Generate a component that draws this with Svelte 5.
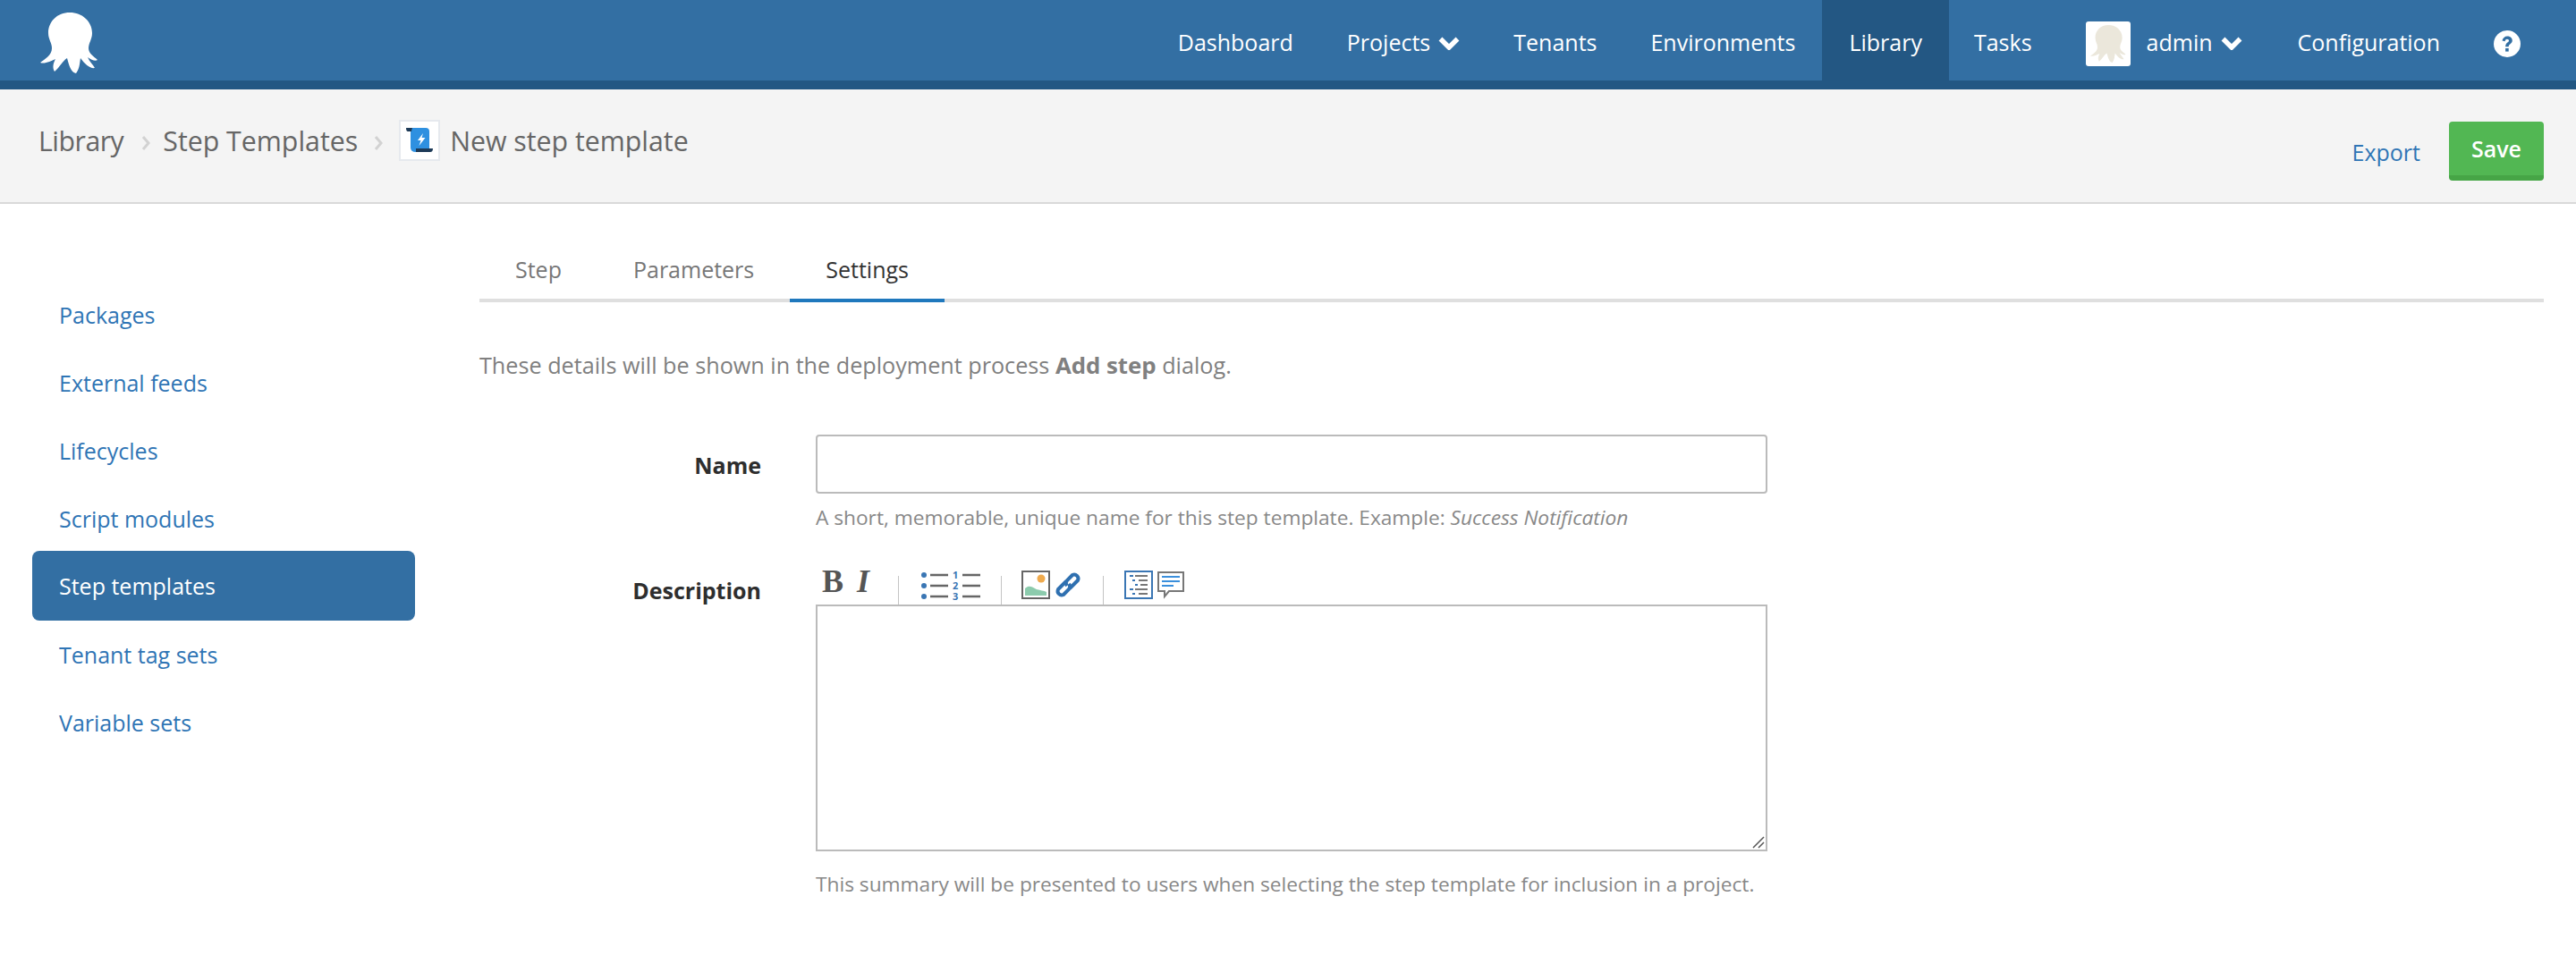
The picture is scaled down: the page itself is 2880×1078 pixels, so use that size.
<script>
	const octopus = "M78 14C92 14 103 24 103 37C103 44 99 48 99 54C99 60 105 63 109 67C107 69 102 67 98 64C100 69 104 72 106 76C101 77 95 72 90 65C89 71 89 77 85 82C79 81 77 72 75 65C70 68 67 75 61 80C58 75 60 70 62 66C57 68 50 72 45 70C50 66 58 62 58 54C58 48 54 44 54 37C54 24 64 14 78 14Z";
	const navLeft = [
		{ label: "Dashboard" },
		{ label: "Projects", caret: true },
		{ label: "Tenants" },
		{ label: "Environments" },
		{ label: "Library", active: true }
	];
	const sideItems = ["Packages", "External feeds", "Lifecycles", "Script modules", "Step templates", "Tenant tag sets", "Variable sets"];
	const tabs = ["Step", "Parameters", "Settings"];
</script>

{#snippet caret()}
	<svg class="caret" viewBox="0 0 24 16"><path d="M2.500 3.500l9.500 9.500 9.500-9.500" fill="none" stroke="#fff" stroke-width="5.500" /></svg>
{/snippet}

{#snippet sep()}
	<svg class="crumb-sep" viewBox="0 0 10 18"><path d="M2 2l6 7-6 7" fill="none" stroke="#d2d2d2" stroke-width="3" /></svg>
{/snippet}

<div class="topbar">
	<div class="bar">
		<svg class="logo" viewBox="45 14 65 68"><path d={octopus} fill="#fff" /></svg>
		<nav class="nav">
			{#each navLeft as item}
				<a class="nav-item" class:active={item.active}>
					{item.label}
					{#if item.caret}{@render caret()}{/if}
				</a>
			{/each}
			<a class="nav-item tasks">Tasks</a>
			<a class="nav-item user">
				<span class="avatar"><svg viewBox="45 14 65 68"><path d={octopus} fill="#ebe7db" /></svg></span>
				admin
				{@render caret()}
			</a>
			<a class="nav-item config">Configuration</a>
			<a class="nav-item help-link">
				<svg viewBox="0 0 30 30" class="help-icon">
					<circle cx="15" cy="15" r="15" fill="#fff" />
					<path d="M9.500 11.500C10 8.500 12.500 6.500 15.200 6.500c3 0 5.600 2 5.600 4.800 0 3.700-4.100 3.900-4.100 6.900h-3.600c0-4.600 3.900-4.700 3.900-6.700 0-1-.8-1.700-2-1.700-1.200 0-2 .8-2.400 2.400z" fill="#336fa3" />
					<rect x="13.100" y="20" width="3.600" height="3.600" fill="#336fa3" />
				</svg>
			</a>
		</nav>
	</div>
</div>

<div class="subheader">
	<div class="crumbs">
		<span class="crumb-first">Library</span>
		{@render sep()}
		<span>Step Templates</span>
		{@render sep()}
		<span class="crumb-icon">
			<svg viewBox="0 0 42 42">
				<path d="M9 7h19q4 0 4 4v23H17q-6 0-6-5V11q0-4-2-4z" fill="#2e90e0" />
				<path d="M6 7h7q-1 3-1 4H8q-2 0-2-4z" fill="#1d3a57" />
				<path d="M17 30h19q0 4-3 4H17z" fill="#1d3a57" />
				<path d="M25 13l-6 8h3.500l-2 6 7-9h-4z" fill="#fff" />
			</svg>
		</span>
		<span class="crumb-last">New step template</span>
	</div>
	<div class="actions">
		<a class="export">Export</a>
		<button class="save">Save</button>
	</div>
</div>

<div class="main">
	<aside class="side">
		{#each sideItems as item}
			<a class="side-item" class:current={item === "Step templates"}>{item}</a>
		{/each}
	</aside>
	<section class="content">
		<div class="tabs">
			{#each tabs as tab}
				<span class="tab" class:selected={tab === "Settings"}>{tab}</span>
			{/each}
		</div>
		<p class="intro">These details will be shown in the deployment process <b>Add step</b> dialog.</p>
		<div class="form">
			<div class="name-label">Name</div>
			<div>
				<input class="text-input" type="text" />
				<p class="hint">A short, memorable, unique name for this step template. Example: <em>Success Notification</em></p>
			</div>
			<div class="desc-label">Description</div>
			<div>
				<div class="toolbar">
					<span class="tool-b">B</span>
					<span class="tool-i">I</span>
					<i class="tool-sep first"></i>
					<svg class="tool-lists" viewBox="0 -4 68 40">
						<g fill="#3a76b4">
							<circle cx="4" cy="5" r="3" /><circle cx="4" cy="17" r="3" /><circle cx="4" cy="29" r="3" />
						</g>
						<path d="M11 5h20M11 17h20M11 29h20M47 5h20M47 17h20M47 29h20" stroke="#666" stroke-width="2.500" />
						<text x="36" y="9" class="num">1</text>
						<text x="36" y="21" class="num">2</text>
						<text x="36" y="33" class="num">3</text>
					</svg>
					<i class="tool-sep second"></i>
					<svg class="tool-img" viewBox="0 0 32 32">
						<rect x="1" y="1" width="30" height="30" fill="#fff" stroke="#666" stroke-width="2" />
						<circle cx="22" cy="9" r="4.500" fill="#efaa4d" />
						<path d="M4 28v-8c4-4 8-2 11 0s9 2 13 4v4z" fill="#8ccbad" />
					</svg>
					<svg class="tool-link" viewBox="0 0 32 32">
						<g fill="none" stroke="#2f70b0" stroke-width="4">
							<path d="M14 12l-9 9a4.500 4.500 0 0 0 6 6l6-6a4.500 4.500 0 0 0 0-6" />
							<path d="M18 20l9-9a4.500 4.500 0 0 0-6-6l-6 6a4.500 4.500 0 0 0 0 6" />
						</g>
					</svg>
					<i class="tool-sep"></i>
					<svg class="tool-src" viewBox="0 0 32 32">
						<rect x="1" y="1" width="30" height="30" fill="#fff" stroke="#3a76b4" stroke-width="2" />
						<path d="M6 6h4M9 11h3M12 16h3M6 21h4M9 26h3" stroke="#3a76b4" stroke-width="2" />
						<path d="M12 6h14M16 11h10M18 16h8M12 21h14M16 26h10" stroke="#777" stroke-width="2" />
					</svg>
					<svg class="tool-note" viewBox="0 0 32 32">
						<path d="M2 2h28v21H14l-5 6v-6H2z" fill="#fff" stroke="#777" stroke-width="2" />
						<path d="M6 7h20M6 12h20M6 17h13" stroke="#3a8fdc" stroke-width="2" />
					</svg>
				</div>
				<div class="area-wrap">
					<textarea class="text-area"></textarea>
					<svg class="grip" viewBox="0 0 14 14"><path d="M1 13L13 1M7 13l6-6" stroke="#555" stroke-width="1.500" /></svg>
				</div>
				<p class="hint below">This summary will be presented to users when selecting the step template for inclusion in a project.</p>
			</div>
		</div>
	</section>
</div>

<style>
	:global(body) {
		background: #fff;
		font-family: "Open Sans", sans-serif;
		overflow: hidden;
	}
	a {
		text-decoration: none;
	}

	.topbar {
		height: 100px;
		background: #235783;
	}
	.bar {
		height: 90px;
		background: #336fa3;
		display: flex;
		justify-content: space-between;
		padding: 0 32px 0 45px;
		box-sizing: border-box;
		width: 100%;
	}
	.logo {
		width: 65px;
		height: 68px;
		margin-top: 14px;
	}
	.nav {
		display: flex;
		height: 100px;
	}
	.nav-item {
		display: flex;
		align-items: center;
		height: 90px;
		box-sizing: border-box;
		padding: 3px 30px 0;
		color: #fff;
		font-size: 25px;
	}
	.nav-item.active {
		background: #235783;
		height: 100px;
		padding-bottom: 10px;
	}
	.nav-item.tasks {
		padding-left: 28px;
	}
	.nav-item.config {
		padding-left: 32px;
	}
	.caret {
		width: 24px;
		height: 16px;
		margin-left: 9px;
		margin-top: 3px;
	}
	.avatar {
		width: 50px;
		height: 50px;
		background: #fff;
		border-radius: 3px;
		margin: 5px 18px 0 0;
		display: flex;
		align-items: center;
		justify-content: center;
	}
	.avatar svg {
		width: 40px;
		height: 42px;
	}
	.help-icon {
		width: 30px;
		height: 30px;
		margin-top: 5px;
	}

	.subheader {
		height: 128px;
		box-sizing: border-box;
		background: #f4f4f4;
		border-bottom: 2px solid #d9d9d9;
		display: flex;
		justify-content: space-between;
		padding: 0 36px 0 43px;
	}
	.crumbs {
		display: flex;
		align-items: center;
		height: 114px;
		font-size: 30.300px;
		color: #666;
	}
	.crumb-first {
		letter-spacing: -0.5px;
		margin-right: 2px;
	}
	.crumb-sep {
		width: 10px;
		height: 18px;
		margin: 6px 14px 0 18px;
	}
	.crumb-icon {
		width: 46px;
		height: 46px;
		box-sizing: border-box;
		background: #fff;
		border: 2px solid #e6e9ee;
		margin: 0 11px 0 4px;
		display: flex;
	}
	.crumb-icon svg {
		width: 42px;
		height: 42px;
	}
	.actions {
		display: flex;
		align-items: flex-start;
		padding-top: 36px;
	}
	.export {
		color: #2f75b5;
		font-size: 25px;
		margin: 17px 32px 0 0;
	}
	.save {
		width: 106px;
		height: 66px;
		background: #52b753;
		border: none;
		border-bottom: 6px solid #46a546;
		border-radius: 4px;
		color: #fff;
		font: 600 25px "Open Sans", sans-serif;
		padding: 0;
	}

	.main {
		display: grid;
		grid-template-columns: 428px 1fr;
		column-gap: 72px;
		padding: 0 36px;
	}
	.side {
		padding-top: 86px;
		display: flex;
		flex-direction: column;
	}
	.side-item {
		height: 76px;
		line-height: 76px;
		padding-left: 30px;
		font-size: 25px;
		color: #2f75b5;
	}
	.side-item.current {
		background: #336fa3;
		color: #fff;
		border-radius: 8px;
		height: 78px;
		line-height: 78px;
		margin-top: -2px;
	}
	.tabs {
		display: flex;
		margin-top: 16px;
		height: 94px;
		box-sizing: border-box;
		border-bottom: 4px solid #dfdfdf;
	}
	.tab {
		padding: 0 40px;
		height: 94px;
		box-sizing: border-box;
		line-height: 114px;
		font-size: 25px;
		color: #777;
	}
	.tab.selected {
		color: #333;
		border-bottom: 4px solid #1f78bd;
	}
	.intro {
		margin: 52px 0 0;
		font-size: 25.200px;
		line-height: 36px;
		color: #808080;
	}
	.intro b {
		font-size: 25.800px;
	}
	.form {
		display: grid;
		grid-template-columns: 315px 1064px;
		column-gap: 61px;
		margin-top: 60px;
	}
	.name-label,
	.desc-label {
		text-align: right;
		font-size: 25px;
		font-weight: 700;
		color: #2e2e2e;
		line-height: 36px;
		padding-top: 16px;
	}
	.desc-label {
		padding-top: 46px;
	}
	.text-input {
		display: block;
		width: 100%;
		height: 66px;
		box-sizing: border-box;
		border: 2px solid #bbb;
		border-radius: 4px;
		background: #fff;
	}
	.hint {
		margin: 10px 0 0;
		font-size: 22.700px;
		line-height: 34px;
		color: #888;
	}
	.toolbar {
		display: flex;
		align-items: flex-start;
		height: 56px;
		margin-top: 24px;
		padding-left: 7px;
	}
	.tool-b {
		font: 700 36px/32px "Liberation Serif", serif;
		color: #555;
		margin-top: 14px;
	}
	.tool-i {
		font: italic 700 36px/32px "Liberation Serif", serif;
		color: #555;
		margin: 14px 0 0 15px;
	}
	.tool-sep {
		width: 1px;
		height: 32px;
		background: #c4c4c4;
		margin: 24px 23px 0 23px;
	}
	.tool-sep.first {
		margin: 24px 24px 0 32px;
	}
	.tool-sep.second {
		margin: 24px 22px 0 22px;
	}
	.tool-lists {
		width: 68px;
		height: 40px;
		margin-top: 14px;
	}
	.num {
		font: 700 11px "Open Sans", sans-serif;
		fill: #3a76b4;
	}
	.tool-img,
	.tool-link {
		width: 32px;
		height: 32px;
		margin-top: 18px;
	}
	.tool-link {
		margin-left: 4px;
	}
	.tool-src,
	.tool-note {
		width: 32px;
		height: 32px;
		margin-top: 18px;
	}
	.tool-note {
		margin-left: 4px;
	}
	.area-wrap {
		position: relative;
	}
	.text-area {
		display: block;
		width: 100%;
		height: 276px;
		box-sizing: border-box;
		border: 2px solid #bbb;
		border-radius: 0;
		background: #fff;
		margin: 0;
		resize: none;
	}
	.grip {
		position: absolute;
		right: 3px;
		bottom: 3px;
		width: 14px;
		height: 14px;
	}
	.hint.below {
		margin-top: 20px;
	}
</style>
